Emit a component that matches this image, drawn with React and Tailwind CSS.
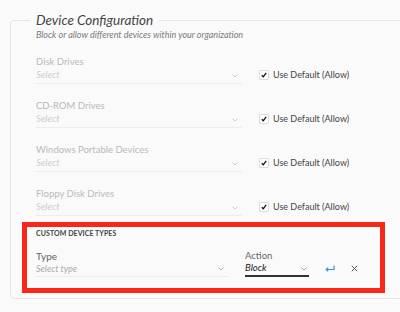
import React from 'react';

const devices = ['Disk Drives', 'CD-ROM Drives', 'Windows Portable Devices', 'Floppy Disk Drives'];

const Chevron = ({ className = '' }) => (
  <svg width="6" height="4" viewBox="0 0 6 4" className={className}>
    <path d="M0.5 0.5 L3 3 L5.5 0.5" fill="none" stroke="currentColor" strokeWidth="0.9" />
  </svg>
);

const DeviceRow = ({ label }) => (
  <div className="flex items-end mb-[16px]">
    <div className="w-[206px]">
      <div className="text-[9.5px] leading-[12px] text-[#b9b9b9]">{label}</div>
      <div className="flex items-center justify-between h-[16px] border-b border-[#ededed] pr-[4px]">
        <span className="italic text-[9.5px] text-[#cdcdcd]">Select</span>
        <Chevron className="text-[#c4c4c4]" />
      </div>
    </div>
    <label className="flex items-center ml-[17px] mb-[3px]">
      <span className="flex items-center justify-center w-[10px] h-[10px] bg-white border border-[#dcdcdc] rounded-[1px]">
        <svg width="6" height="6" viewBox="0 0 6 6">
          <path d="M0.8 3.2 L2.3 4.8 L5.2 0.9" fill="none" stroke="#111" strokeWidth="1.3" />
        </svg>
      </span>
      <span className="ml-[4px] text-[9px] leading-[12px] text-[#444]">Use Default (Allow)</span>
    </label>
  </div>
);

export default function App() {
  return (
    <div
      className="w-[400px] h-[312px] overflow-hidden bg-[#fafafa]"
      style={{ fontFamily: 'Lato, "Open Sans", sans-serif' }}
    >
      <fieldset className="mt-[12px] ml-[10px] w-[420px] border border-[#e5e5e5] rounded-[4px] pl-[11px] pb-[5px] pt-0 bg-[#fafafa]">
        <legend className="ml-[8px] px-[6px] italic text-[13.5px] leading-[16px] text-[#444]">
          Device Configuration
        </legend>
        <div className="pl-[14px]">
          <p className="italic text-[9px] leading-[12px] text-[#7a7a7a] mt-[1px]">
            Block or allow different devices within your organization
          </p>
          <div className="mt-[15px]">
            {devices.map((d) => (
              <DeviceRow key={d} label={d} />
            ))}
          </div>
        </div>
        <div className="w-[363px] mt-[-10px] border-[5px] border-[#f9261a] pl-[9px] pt-[2px] pb-[11px]">
          <div className="text-[7px] leading-[8px] font-bold tracking-[0.01em] text-[#444] uppercase">
            Custom Device Types
          </div>
          <div className="flex items-end mt-[13px]">
            <div className="w-[192px]">
              <div className="text-[10px] leading-[12px] text-[#666]">Type</div>
              <div className="flex items-center justify-between h-[15px] border-b border-[#ebebeb] pr-[4px]">
                <span className="italic text-[9px] text-[#aaa]">Select type</span>
                <Chevron className="text-[#aaa]" />
              </div>
            </div>
            <div className="w-[64px] ml-[17px]">
              <div className="text-[9.5px] leading-[12px] text-[#666]">Action</div>
              <div className="flex items-center justify-between h-[15px] border-b-2 border-[#333] pr-[2px]">
                <span className="italic text-[9.5px] text-[#222]">Block</span>
                <Chevron className="text-[#999]" />
              </div>
            </div>
            <svg width="10" height="7" viewBox="0 0 10 7" className="ml-[16px] mb-[5px] text-[#3b8fe4]">
              <path d="M9 0.5 V4.5 H1.5" fill="none" stroke="currentColor" strokeWidth="1.2" />
              <path d="M3.2 2.6 L1.2 4.5 L3.2 6.4" fill="none" stroke="currentColor" strokeWidth="1.2" />
            </svg>
            <svg width="7" height="7" viewBox="0 0 7 7" className="ml-[16px] mb-[5px] text-[#555]">
              <path d="M0.8 0.8 L6.2 6.2 M6.2 0.8 L0.8 6.2" fill="none" stroke="currentColor" strokeWidth="1" />
            </svg>
          </div>
        </div>
      </fieldset>
    </div>
  );
}
